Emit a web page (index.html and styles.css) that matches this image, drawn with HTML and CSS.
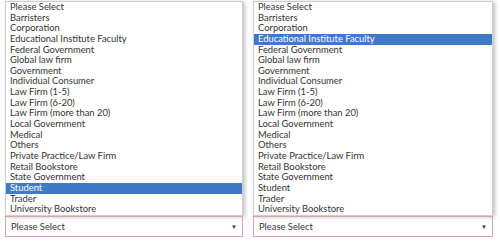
FILE: index.html
```html
<!DOCTYPE html>
<html>
<head>
<meta charset="utf-8">
<link rel="stylesheet" href="styles.css">
</head>
<body>
<div class="page">
  <div class="field">
    <ul class="options">
      <li>Please Select</li>
      <li>Barristers</li>
      <li>Corporation</li>
      <li>Educational Institute Faculty</li>
      <li>Federal Government</li>
      <li>Global law firm</li>
      <li>Government</li>
      <li>Individual Consumer</li>
      <li>Law Firm (1-5)</li>
      <li>Law Firm (6-20)</li>
      <li>Law Firm (more than 20)</li>
      <li>Local Government</li>
      <li>Medical</li>
      <li>Others</li>
      <li>Private Practice/Law Firm</li>
      <li>Retail Bookstore</li>
      <li>State Government</li>
      <li class="selected">Student</li>
      <li>Trader</li>
      <li>University Bookstore</li>
    </ul>
    <div class="select"><span>Please Select</span><span class="arrow">&#9660;</span></div>
  </div>
  <div class="field">
    <ul class="options">
      <li>Please Select</li>
      <li>Barristers</li>
      <li>Corporation</li>
      <li class="selected">Educational Institute Faculty</li>
      <li>Federal Government</li>
      <li>Global law firm</li>
      <li>Government</li>
      <li>Individual Consumer</li>
      <li>Law Firm (1-5)</li>
      <li>Law Firm (6-20)</li>
      <li>Law Firm (more than 20)</li>
      <li>Local Government</li>
      <li>Medical</li>
      <li>Others</li>
      <li>Private Practice/Law Firm</li>
      <li>Retail Bookstore</li>
      <li>State Government</li>
      <li>Student</li>
      <li>Trader</li>
      <li>University Bookstore</li>
    </ul>
    <div class="select"><span>Please Select</span><span class="arrow">&#9660;</span></div>
  </div>
</div>
</body>
</html>
```
FILE: styles.css
```css
html, body {
  margin: 0;
  padding: 0;
  background: #ffffff;
}
body {
  font-family: Lato, "Open Sans", sans-serif;
  color: #333333;
}
.page {
  display: grid;
  grid-template-columns: 238px 240px;
  column-gap: 10px;
  padding: 1px 0 0 5px;
}
.field {
  display: flex;
  flex-direction: column;
}
.options {
  list-style: none;
  margin: 0;
  padding: 0;
  border: 1px solid #cfcfcf;
  background: #fff;
  box-shadow: 2px 1px 4px rgba(0, 0, 0, 0.25);
}
.options li {
  height: 10.65px;
  line-height: 10.65px;
  font-size: 9.4px;
  padding-left: 4px;
  white-space: nowrap;
}
.options li.selected {
  background: #4079c6;
  color: #ffffff;
}
.select {
  display: flex;
  justify-content: space-between;
  align-items: center;
  height: 19px;
  border: 1px solid #dca3aa;
  padding: 0 5px 0 5px;
  font-size: 9.4px;
  color: #333;
}
.arrow {
  font-size: 6px;
  color: #333;
}
```
